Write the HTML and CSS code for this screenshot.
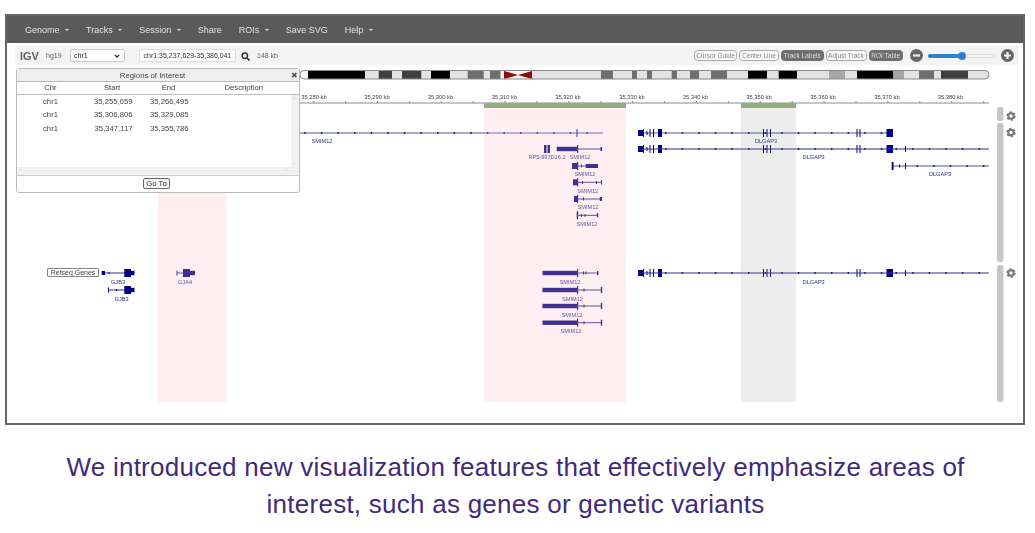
FILE: index.html
```html
<!DOCTYPE html>
<html lang="en">
<head>
<meta charset="utf-8">
<title>IGV Regions of Interest</title>
<link rel="stylesheet" href="styles.css">
</head>
<body>
<main class="frame">
  <nav class="nav">
    <span class="nav-item">Genome<i class="caret"></i></span>
    <span class="nav-item">Tracks<i class="caret"></i></span>
    <span class="nav-item">Session<i class="caret"></i></span>
    <span class="nav-item">Share</span>
    <span class="nav-item">ROIs<i class="caret"></i></span>
    <span class="nav-item">Save SVG</span>
    <span class="nav-item">Help<i class="caret"></i></span>
  </nav>
  <div class="toolbar">
    <span class="logo">IGV</span>
    <span class="genome">hg19</span>
    <span class="select">chr1<svg class="chev" viewBox="0 0 8 5"><path d="M1 1l3 3 3-3" fill="none" stroke="#222" stroke-width="1.6"/></svg></span>
    <span class="locus">chr1:35,237,629-35,386,041</span>
    <svg class="search" viewBox="0 0 10 10"><circle cx="4.2" cy="4.2" r="3" fill="none" stroke="#333" stroke-width="1.6"/><path d="M6.4 6.4l3 3" stroke="#333" stroke-width="1.9"/></svg>
    <span class="size">148 kb</span>
    <div class="controls">
      <span class="btn btn-cursor">Cursor Guide</span>
      <span class="btn btn-center">Center Line</span>
      <span class="btn btn-labels on">Track Labels</span>
      <span class="btn btn-adjust">Adjust Track</span>
      <span class="btn btn-roi on">ROI Table</span>
      <svg class="zoom-btn" viewBox="0 0 13 13"><circle cx="6.5" cy="6.5" r="6.5" fill="#666"/><rect x="3" y="5.4" width="7" height="2.2" fill="#eee"/></svg>
      <span class="slider"><span class="slider-fill"></span><span class="slider-knob"></span></span>
      <svg class="zoom-btn" viewBox="0 0 13 13"><circle cx="6.5" cy="6.5" r="6.5" fill="#666"/><path d="M3 5.4h2.4V3h2.2v2.4H10v2.2H7.600v2.400H5.400V7.600H3z" fill="#eee"/></svg>
    </div>
  </div>

  <div class="canvas">
    <svg class="tracks" viewBox="7 66 1016 356" width="1016" height="356">
      <defs>
        <g id="dlg">
          <path class="ex" d="M638-3h5v6h-5zM643-4h1V4h-1z"/>
          <rect class="ex" x="646.500" y="-2" width="1" height="4"/>
          <rect class="ex" x="649.500" y="-4" width="1" height="8"/>
          <rect class="ex" x="653" y="-4" width="1" height="8"/>
          <rect class="ex" x="658" y="-4" width="4" height="8"/>
          <rect class="ex" x="763" y="-4" width="1" height="8"/>
          <rect class="ex" x="766.500" y="-4" width="1" height="8"/>
          <rect class="ex" x="770" y="-4" width="1" height="8"/>
          <rect class="ex" x="856.500" y="-4" width="1" height="8"/>
          <rect class="ex" x="859.500" y="-4" width="1" height="8"/>
          <rect class="ex" x="886.500" y="-4" width="6.500" height="8"/>
        </g>
        <g id="dlg-long">
          <use href="#dlg"/>
          <line class="thin" x1="638" x2="989" y1="0" y2="0"/>
          <line class="mark" x1="665" x2="886" y1="0" y2="0"/>
          <line class="mark" x1="895.500" x2="989" y1="0" y2="0"/>
          <rect class="ex" x="905" y="-3" width="1" height="6"/>
        </g>
        <g id="smim-bar">
          <rect class="ex" x="542.500" y="-2.200" width="34.500" height="4.400"/>
          <rect class="ex" x="577" y="-4" width="1.200" height="8"/>
        </g>
        <g id="smim-long">
          <use href="#smim-bar"/>
          <line class="thin" x1="577" x2="602" y1="0" y2="0"/>
          <rect class="ex" x="583.500" y="-1.500" width="1" height="3"/>
          <rect class="ex" x="600.800" y="-3" width="1.400" height="6"/>
        </g>
        <g id="gjb-end">
          <rect class="ex" x="124.300" y="-4" width="6.700" height="8"/>
          <rect class="ex" x="131" y="-2.200" width="3.500" height="4.400"/>
        </g>
        <g id="cog">
          <circle r="2.700" fill="none" stroke="#777" stroke-width="2"/>
          <circle r="3.900" fill="none" stroke="#777" stroke-width="1.600" stroke-dasharray="2.200 1.860"/>
        </g>
      </defs>

      <!-- ideogram -->
      <g class="ideogram">
        <rect class="b-l" x="300" y="70.500" width="689" height="8.500" rx="4"/>
        <rect class="b-w" x="300" y="71" width="8" height="8"/>
        <rect class="b-k" x="308" y="71" width="57" height="8"/>
        <rect class="b-d" x="378.700" y="71" width="13.300" height="8"/>
        <rect class="b-d" x="402" y="71" width="19.300" height="8"/>
        <rect class="b-k" x="431" y="71" width="19" height="8"/>
        <rect class="b-g" x="467.700" y="71" width="16" height="8"/>
        <rect class="b-g" x="490" y="71" width="10.700" height="8"/>
        <rect class="b-w" x="500.700" y="71" width="31" height="8"/>
        <path d="M504 71l14 4-14 4zM532 71l-14 4 14 4z" fill="#8e0b0b"/>
        <rect class="b-g" x="601" y="71" width="12" height="8"/>
        <rect class="b-g" x="632" y="71" width="5" height="8"/>
        <rect class="b-g" x="647" y="71" width="5" height="8"/>
        <rect class="b-g" x="671.700" y="71" width="5.300" height="8"/>
        <rect class="b-g" x="690" y="71" width="9" height="8"/>
        <rect class="b-g" x="711" y="71" width="16" height="8"/>
        <rect class="b-k" x="748" y="71" width="19" height="8"/>
        <rect class="b-k" x="778.700" y="71" width="18.300" height="8"/>
        <rect class="b-m" x="829" y="71" width="16" height="8"/>
        <rect class="b-k" x="857" y="71" width="36.300" height="8"/>
        <rect class="b-m" x="893.300" y="71" width="10.700" height="8"/>
        <rect class="b-g" x="919" y="71" width="15" height="8"/>
        <rect class="b-d" x="941" y="71" width="27" height="8"/>
        <rect class="b-line" x="300" y="70.500" width="689" height="8.500" rx="4"/>
      </g>

      <!-- ruler -->
      <g class="ruler">
        <text x="314" y="99">35,280 kb</text>
        <text x="377" y="99">35,290 kb</text>
        <text x="440.500" y="99">35,300 kb</text>
        <text x="504.500" y="99">35,310 kb</text>
        <text x="568" y="99">35,320 kb</text>
        <text x="632" y="99">35,330 kb</text>
        <text x="695.500" y="99">35,340 kb</text>
        <text x="759" y="99">35,350 kb</text>
        <text x="823" y="99">35,360 kb</text>
        <text x="887" y="99">35,370 kb</text>
        <text x="950.500" y="99">35,380 kb</text>
      </g>
      <line class="axis" x1="300" x2="989" y1="103" y2="103"/>
      <line class="ticks" x1="313.200" x2="989" y1="102" y2="102"/>

      <!-- refseq track, row one -->
      <line class="thick" x1="300" x2="603" y1="133" y2="133"/>
      <line class="mark" x1="304.200" x2="603" y1="133" y2="133"/>
      <rect class="ex" x="576.500" y="129" width="1" height="8"/>
      <text class="lb" x="322" y="143">SMIM12</text>
      <line class="thick" x1="638" x2="887" y1="133" y2="133"/>
      <line class="mark" x1="665" x2="886" y1="133" y2="133"/>
      <use href="#dlg" y="133"/>
      <text class="lb" x="766" y="143">DLGAP3</text>

      <!-- row two -->
      <rect class="ex" x="544" y="145" width="2.500" height="8"/>
      <rect class="ex" x="547.500" y="145" width="2.500" height="8"/>
      <text class="lb" x="547" y="159">RP5-997D16.2</text>
      <rect class="ex" x="556.700" y="146.800" width="20.300" height="4.400"/>
      <rect class="ex" x="577" y="145" width="1.200" height="8"/>
      <line class="thin" x1="577" x2="602" y1="149" y2="149"/>
      <rect class="ex" x="600.500" y="147" width="1.500" height="4"/>
      <text class="lb" x="580" y="159">SMIM12</text>
      <use href="#dlg-long" y="149"/>
      <text class="lb" x="813.700" y="159">DLGAP3</text>

      <!-- row three -->
      <rect class="ex" x="572" y="163" width="5" height="6"/>
      <rect class="ex" x="577" y="162" width="1.200" height="8"/>
      <line class="thin" x1="577" x2="586" y1="166" y2="166"/>
      <rect class="ex" x="581" y="164.500" width="1" height="3"/>
      <rect class="ex" x="585.700" y="164" width="12.300" height="4"/>
      <text class="lb" x="585" y="176">SMIM12</text>
      <line class="thick-2" x1="892" x2="989" y1="166" y2="166"/>
      <line class="mark" x1="916.500" x2="989" y1="166" y2="166"/>
      <rect class="ex" x="891.700" y="162" width="1.800" height="8"/>
      <rect class="ex" x="905" y="163" width="1" height="6"/>
      <rect class="ex" x="899" y="164.500" width="1" height="3"/>
      <text class="lb" x="940" y="176">DLGAP3</text>

      <!-- rows four to six -->
      <rect class="ex" x="573" y="179.300" width="4.500" height="6"/>
      <rect class="ex" x="577" y="178.300" width="1.200" height="8"/>
      <line class="thin" x1="577" x2="602" y1="182.300" y2="182.300"/>
      <rect class="ex" x="582" y="181" width="1" height="3"/>
      <rect class="ex" x="596" y="181" width="1" height="3"/>
      <rect class="ex" x="601" y="180" width="1" height="4.600"/>
      <text class="lb" x="587.700" y="192.500">SMIM12</text>

      <rect class="ex" x="574" y="196" width="3.500" height="6"/>
      <rect class="ex" x="577" y="195" width="1.200" height="8"/>
      <line class="thin" x1="577" x2="602" y1="199" y2="199"/>
      <rect class="ex" x="583" y="197.500" width="1" height="3"/>
      <rect class="ex" x="599.800" y="197" width="2.200" height="4"/>
      <text class="lb" x="588" y="209">SMIM12</text>

      <rect class="ex" x="576.700" y="211.300" width="1.500" height="8"/>
      <line class="thin" x1="577" x2="598" y1="215.300" y2="215.300"/>
      <rect class="ex" x="581" y="214" width="1" height="3"/>
      <rect class="ex" x="584.500" y="214" width="1" height="3"/>
      <rect class="ex" x="596.800" y="213.300" width="1.500" height="4"/>
      <text class="lb" x="587" y="225.500">SMIM12</text>

      <!-- lower track -->
      <g transform="translate(0 273)">
        <rect class="ex" x="101.700" y="-2" width="3.300" height="4"/>
        <line class="thin" x1="105" x2="125" y1="0" y2="0"/>
        <rect class="ex" x="108.500" y="-1" width="1" height="2"/>
        <use href="#gjb-end"/>
      </g>
      <text class="lb" x="118" y="284">GJB3</text>
      <g transform="translate(0 290)">
        <rect class="ex" x="108" y="-2.500" width="1" height="5"/>
        <line class="thin" x1="108" x2="125" y1="0" y2="0"/>
        <rect class="ex" x="116" y="-1" width="1" height="2"/>
        <use href="#gjb-end"/>
      </g>
      <text class="lb" x="121.700" y="300.500">GJB3</text>
      <g transform="translate(0 273)">
        <rect class="ex" x="176.500" y="-2.500" width="1" height="5"/>
        <line class="thin" x1="177" x2="184" y1="0" y2="0"/>
        <rect class="ex" x="183" y="-4" width="7" height="8"/>
        <rect class="ex" x="190" y="-2.200" width="5" height="4.400"/>
      </g>
      <text class="lb" x="185" y="284">GJA4</text>

      <use href="#smim-bar" y="273"/>
      <line class="thin" x1="577" x2="598" y1="273" y2="273"/>
      <rect class="ex" x="583" y="271.500" width="1" height="3"/>
      <rect class="ex" x="585.500" y="271.500" width="1" height="3"/>
      <rect class="ex" x="597" y="271" width="1.400" height="4"/>
      <text class="lb" x="570" y="284">SMIM12</text>
      <use href="#smim-long" y="290"/>
      <text class="lb" x="572.500" y="300.500">SMIM12</text>
      <use href="#smim-long" y="306"/>
      <text class="lb" x="572" y="317">SMIM12</text>
      <use href="#smim-long" y="322.700"/>
      <text class="lb" x="571" y="333">SMIM12</text>

      <use href="#dlg-long" y="273"/>
      <text class="lb" x="813.700" y="284">DLGAP3</text>

      <!-- highlighted regions -->
      <rect class="roi" x="158" y="103" width="69" height="299"/>
      <rect class="roi" x="484" y="103" width="142" height="299"/>
      <rect class="roi-grey" x="741" y="103" width="55" height="299"/>
      <rect class="roi-bar" x="158" y="103" width="69" height="5"/>
      <rect class="roi-bar" x="484" y="103" width="142" height="5"/>
      <rect class="roi-bar" x="741" y="103" width="55" height="5"/>

      <!-- scrollbars and gears -->
      <rect class="scroll" x="997" y="107" width="6.500" height="14" rx="2.500"/>
      <rect class="scroll" x="997" y="123" width="6.500" height="139" rx="2.500"/>
      <rect class="scroll" x="997" y="265" width="6.500" height="137" rx="2.500"/>
      <use href="#cog" x="1011" y="116"/>
      <use href="#cog" x="1011" y="132.500"/>
      <use href="#cog" x="1011" y="273"/>
    </svg>

    <span class="track-name">Refseq Genes</span>

    <section class="dialog">
      <header class="dialog-title">Regions of Interest<span class="dialog-close">✖</span></header>
      <div class="grid-head">
        <span class="c-chr">Chr</span><span class="c-start">Start</span><span class="c-end">End</span><span class="c-desc">Description</span>
      </div>
      <div class="grid-body">
        <div class="grid-rows">
          <div class="grid-row"><span class="c-chr">chr1</span><span class="c-start">35,255,659</span><span class="c-end">35,266,495</span></div>
          <div class="grid-row"><span class="c-chr">chr1</span><span class="c-start">35,306,806</span><span class="c-end">35,329,085</span></div>
          <div class="grid-row"><span class="c-chr">chr1</span><span class="c-start">35,347,117</span><span class="c-end">35,355,786</span></div>
        </div>
        <div class="vbar"><i class="arrow-up"></i><i class="arrow-down"></i></div>
      </div>
      <div class="hbar"><i class="arrow-left"></i><i class="arrow-right"></i></div>
      <footer class="dialog-foot"><span class="goto">Go To</span></footer>
    </section>
  </div>
</main>
<p class="caption">We introduced new visualization features that effectively emphasize areas of<br>interest, such as genes or genetic variants</p>
</body>
</html>
```

FILE: styles.css
```css
* { box-sizing: border-box; }
html, body { margin: 0; padding: 0; background: #fff; }
body { width: 1035px; height: 533px; overflow: hidden; font-family: "Liberation Sans", Arial, sans-serif; }

.frame {
  width: 1020px;
  height: 411px;
  margin: 14px 0 0 5px;
  border: 2px solid #666;
  display: flex;
  flex-direction: column;
  background: #fff;
  filter: blur(0.35px);
}

.nav {
  height: 27px;
  flex: none;
  display: flex;
  align-items: center;
  gap: 17px;
  padding: 1px 0 0 18px;
  background: #5a5a5a;
  color: #e2e2e2;
  font-size: 9px;
}
.nav-item { display: flex; align-items: center; }
.caret {
  margin-left: 5.500px;
  width: 0;
  height: 0;
  border: 2.500px solid transparent;
  border-top-color: #ddd;
  border-bottom: 0;
}

.toolbar {
  height: 19px;
  flex: none;
  margin: 3px 4px 0 8px;
  display: flex;
  align-items: center;
  background: #f3f3f3;
  border-radius: 2px;
  font-size: 7px;
  color: #666;
}
.logo { margin-left: 5px; width: 26px; font-size: 11px; font-weight: bold; color: #5f5f5f; }
.genome { width: 24px; }
.select {
  width: 55px;
  height: 13px;
  padding: 0 3px;
  display: flex;
  align-items: center;
  justify-content: space-between;
  background: #fff;
  border: 1px solid #ccc;
  border-radius: 2px;
  color: #222;
}
.chev { width: 6px; height: 4px; margin-right: 1px; }
.locus {
  width: 97px;
  height: 13px;
  margin-left: 14px;
  line-height: 11px;
  text-align: center;
  background: #fff;
  border: 1px solid #ddd;
  border-radius: 2px;
  color: #333;
  white-space: nowrap;
}
.search { width: 9px; height: 9px; margin: 1px 7px 0 5px; }
.size { color: #666; }
.controls { margin-left: auto; display: flex; align-items: center; height: 100%; }
.btn {
  height: 11px;
  line-height: 9.500px;
  text-align: center;
  border: 1px solid #aaa;
  border-radius: 3.500px;
  background: #f8f8f8;
  color: #888;
  font-size: 6.500px;
  white-space: nowrap;
}
.btn.on { background: #6f6f6f; border-color: #6f6f6f; color: #ddd; }
.btn-cursor { width: 43px; }
.btn-center { width: 40px; margin-left: 2px; }
.btn-labels { width: 42.500px; margin-left: 2px; }
.btn-adjust { width: 41px; margin-left: 2px; }
.btn-roi { width: 34.500px; margin-left: 2px; }
.zoom-btn { width: 13px; height: 13px; flex: none; }
.controls .btn-roi + .zoom-btn { margin-left: 7px; }
.controls .slider + .zoom-btn { margin: 0 5px 0 5px; }
.slider {
  position: relative;
  width: 68px;
  height: 4px;
  margin-left: 5px;
  background: #f4f4f4;
  border: 1px solid #ddd;
  border-radius: 2px;
}
.slider-fill {
  position: absolute;
  left: -1px;
  top: -1px;
  width: 33px;
  height: 4px;
  background: #2f7fd0;
  border-radius: 2px;
}
.slider-knob {
  position: absolute;
  left: 29px;
  top: -3px;
  width: 8px;
  height: 8px;
  background: #2f7fd0;
  border-radius: 50%;
}

.canvas { position: relative; flex: 1; margin-top: 1px; overflow: hidden; }
.tracks { display: block; }

.b-l { fill: #e3e3e3; }
.b-w { fill: #f4f4f4; }
.b-k { fill: #000; }
.b-d { fill: #3f3f3f; }
.b-g { fill: #6f6f6f; }
.b-m { fill: #a6a6a6; }
.b-line { fill: none; stroke: #8a8a8a; stroke-width: 1; }

.ruler text { font-size: 5.800px; fill: #444; text-anchor: middle; }
.axis { stroke: #8a8a8a; stroke-width: 1; }
.ticks { stroke: #8a8a8a; stroke-width: 2; stroke-dasharray: 1 30.900; }

.ex { fill: #000085; }
.thin { stroke: #2e2e8c; stroke-width: 1; }
.thick { stroke: #a9a9cd; stroke-width: 2; }
.thick-2 { stroke: #8d8dbf; stroke-width: 1.500; }
.mark { stroke: #20208a; stroke-width: 2; stroke-dasharray: 1.500 15.100; }
.lb { font-size: 5.600px; fill: #2f2f8c; text-anchor: middle; }

.roi { fill: rgba(255, 192, 203, 0.25); }
.roi-grey { fill: rgba(128, 128, 128, 0.14); }
.roi-bar { fill: #93b07c; }
.scroll { fill: #c6c6c6; }

.track-name {
  position: absolute;
  left: 40px;
  top: 202px;
  width: 52px;
  height: 9px;
  line-height: 7px;
  text-align: center;
  font-size: 7px;
  color: #444;
  background: #fff;
  border: 1px solid #888;
  border-radius: 1px;
}

.dialog {
  position: absolute;
  left: 8.500px;
  top: 1.500px;
  width: 284px;
  height: 125px;
  display: flex;
  flex-direction: column;
  background: #fff;
  border: 1px solid #bbb;
  border-radius: 3px;
  font-size: 7.700px;
  color: #444;
}
.dialog-title {
  position: relative;
  flex: none;
  height: 13px;
  line-height: 13px;
  padding-right: 10px;
  text-align: center;
  background: #eee;
  border-bottom: 1px solid #bbb;
  font-size: 7.800px;
}
.dialog-close { position: absolute; right: 1px; top: 0; font-size: 8px; color: #555; }
.grid-head {
  flex: none;
  height: 13px;
  display: flex;
  align-items: center;
  border-bottom: 1px solid #bbb;
}
.grid-body { flex: none; height: 72px; display: flex; }
.grid-rows { flex: 1; }
.grid-row { height: 13.500px; display: flex; align-items: center; }
.c-chr { width: 68px; text-align: center; }
.c-start { width: 48px; text-align: right; }
.c-end { width: 56px; text-align: right; }
.grid-head .c-start { width: 35px; margin-left: 10px; text-align: center; }
.grid-head .c-end { width: 30px; margin-left: 24px; text-align: center; }
.c-desc { margin-left: 41px; }
.vbar { position: relative; flex: none; width: 8px; background: #f1f1f1; }
.hbar { position: relative; flex: none; height: 9px; background: #f1f1f1; border-bottom: 1px solid #ccc; }
.arrow-up, .arrow-down, .arrow-left, .arrow-right { position: absolute; width: 0; height: 0; border: 1.500px solid transparent; }
.arrow-up { left: 2.500px; top: 3px; border-top: 0; border-bottom-color: #bbb; }
.arrow-down { left: 2.500px; bottom: 3px; border-bottom: 0; border-top-color: #bbb; }
.arrow-left { left: 3px; top: 2.500px; border-left: 0; border-right-color: #bbb; }
.arrow-right { right: 12px; top: 2.500px; border-right: 0; border-left-color: #bbb; }
.dialog-foot { flex: 1; display: flex; align-items: center; justify-content: center; padding-right: 2px; }
.goto {
  width: 27px;
  height: 11px;
  line-height: 9px;
  text-align: center;
  border: 1px solid #666;
  border-radius: 2px;
  background: #f6f6f6;
  color: #333;
}

.caption {
  margin: 24px 0 0;
  width: 1031px;
  text-align: center;
  font-size: 26px;
  letter-spacing: 0.25px;
  line-height: 37px;
  color: #3f2a7c;
}
```
